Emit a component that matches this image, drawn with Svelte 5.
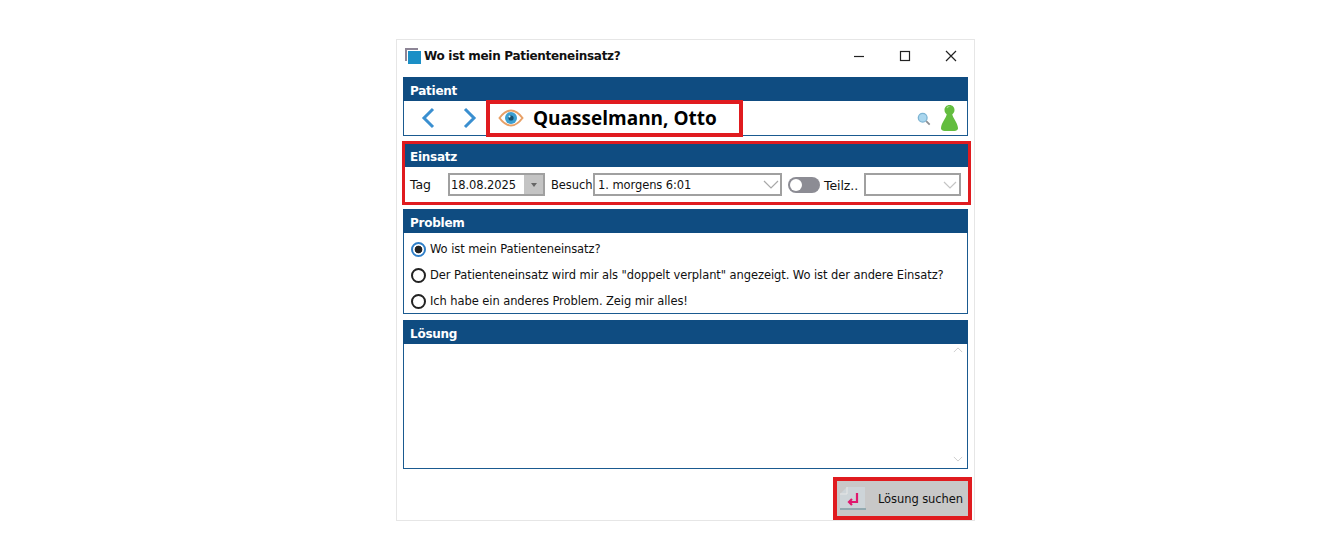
<script>
  const problems = [
    'Wo ist mein Patienteneinsatz?',
    'Der Patienteneinsatz wird mir als "doppelt verplant" angezeigt. Wo ist der andere Einsatz?',
    'Ich habe ein anderes Problem. Zeig mir alles!'
  ];
  let selected = $state(0);
</script>

<div class="window">
  <div class="titlebar">
    <svg class="appicon" width="16" height="16" viewBox="0 0 16 16">
      <path d="M1 13V1H13" fill="none" stroke="#8d8596" stroke-width="2" />
      <rect x="3" y="3" width="13" height="13" fill="#1b8fc6" />
    </svg>
    <span class="title">Wo ist mein Patienteneinsatz?</span>
    <div class="winbtns">
      <svg width="12" height="12" viewBox="0 0 12 12"><path d="M1 6.500h10" stroke="#222" stroke-width="1.200" /></svg>
      <svg width="12" height="12" viewBox="0 0 12 12"><rect x="1.500" y="1.500" width="9" height="9" fill="none" stroke="#222" stroke-width="1.200" /></svg>
      <svg width="12" height="12" viewBox="0 0 12 12"><path d="M1 1l10 10M11 1L1 11" stroke="#222" stroke-width="1.200" /></svg>
    </div>
  </div>

  <section class="panel patient">
    <h2>Patient</h2>
    <div class="body patient-row">
      <svg class="nav" width="14" height="22" viewBox="0 0 14 22"><path d="M12 2L3 11l9 9" fill="none" stroke="#3a8fd0" stroke-width="3" /></svg>
      <svg class="nav next" width="14" height="22" viewBox="0 0 14 22"><path d="M2 2l9 9-9 9" fill="none" stroke="#3a8fd0" stroke-width="3" /></svg>
      <div class="name-box">
        <svg width="26" height="18" viewBox="0 0 26 18">
          <path d="M1.500 9C6 3 9.500 1.500 13 1.500S20 3 24.500 9C20 15 16.500 16.500 13 16.500S6 15 1.500 9Z" fill="#fff" stroke="#e8a066" stroke-width="2" />
          <circle cx="13" cy="9" r="6" fill="#3d9fd0" />
          <circle cx="13" cy="9" r="2.600" fill="#17506f" />
          <circle cx="11.500" cy="7.500" r="1" fill="#d8f0fa" />
        </svg>
        <span class="name">Quasselmann, Otto</span>
      </div>
      <svg class="lens" width="14" height="14" viewBox="0 0 16 16">
        <circle cx="6.500" cy="6.500" r="5" fill="#a9d6ee" stroke="#7db4d3" stroke-width="1.500" />
        <path d="M10.500 10.500l4 4" stroke="#8b8f94" stroke-width="2" />
      </svg>
      <svg class="pawn" width="17" height="26" viewBox="0 0 17 26">
        <path d="M8.500 0C11.500 0 13.500 2.300 13.500 5C13.500 7 12.500 8.400 11.300 9.200C11.800 13 16.500 17.500 17 23C17.200 25 15.500 26 13.500 26H3.500C1.500 26 -.2 25 0 23C.5 17.500 5.200 13 5.700 9.200C4.500 8.400 3.500 7 3.500 5C3.500 2.300 5.500 0 8.500 0Z" fill="#63bd3f" />
        <path d="M6 3C6.500 2 7.500 1.500 8.500 1.500" fill="none" stroke="#a8e08a" stroke-width="1.200" />
      </svg>
    </div>
  </section>

  <section class="panel einsatz">
    <h2>Einsatz</h2>
    <div class="body einsatz-row">
      <span class="tag">Tag</span>
      <div class="field date">
        <span>18.08.2025</span>
        <span class="spin"><i></i></span>
      </div>
      <span class="besuch">Besuch</span>
      <div class="field visit">
        <span>1. morgens 6:01</span>
        <svg width="16" height="9" viewBox="0 0 16 9"><path d="M1 1l7 7 7-7" fill="none" stroke="#a8a8a8" stroke-width="1.200" /></svg>
      </div>
      <span class="toggle"><i></i></span>
      <span class="teilz">Teilz..</span>
      <div class="field part">
        <svg width="14" height="8" viewBox="0 0 14 8"><path d="M1 1l6 6 6-6" fill="none" stroke="#c4c4c4" stroke-width="1.200" /></svg>
      </div>
    </div>
  </section>

  <section class="panel problem">
    <h2>Problem</h2>
    <div class="body options">
      {#each problems as text, i}
        <button class="option" onclick={() => (selected = i)}>
          <span class="radio" class:on={selected === i}></span>
          <span>{text}</span>
        </button>
      {/each}
    </div>
  </section>

  <section class="panel solution">
    <h2>Lösung</h2>
    <div class="body textarea">
      <svg width="10" height="6" viewBox="0 0 12 7"><path d="M1 6l5-5 5 5" fill="none" stroke="#cfcfcf" stroke-width="1.200" /></svg>
      <svg width="10" height="6" viewBox="0 0 12 7"><path d="M1 1l5 5 5-5" fill="none" stroke="#cfcfcf" stroke-width="1.200" /></svg>
    </div>
  </section>

  <div class="footer">
    <button class="search">
      <svg width="26" height="24" viewBox="0 0 26 24">
        <path d="M7 0H25V21H0V7Z" fill="#cdd4d8" />
        <path d="M7 0V7H0" fill="none" stroke="#e6e6e6" stroke-width="1" />
        <rect x="0" y="21" width="26" height="2" fill="#93aab0" />
        <path d="M17 6v9H9M12 12l-3 3 3 3" fill="none" stroke="#e0196e" stroke-width="2.200" />
      </svg>
      <span>Lösung suchen</span>
    </button>
  </div>
</div>

<style>
  :global(body) {
    background: #fff;
  }
  .window {
    box-sizing: border-box;
    width: 579px;
    height: 482px;
    margin: 39px 0 0 396px;
    padding: 0 6px;
    border: 1px solid #e6e6e6;
    background: #fff;
    font-family: "DejaVu Sans", sans-serif;
    font-size: 11.5px;
    letter-spacing: -0.08px;
    color: #111;
    display: flex;
    flex-direction: column;
  }
  .titlebar {
    box-sizing: border-box;
    height: 37px;
    flex: none;
    padding-bottom: 5px;
    display: flex;
    align-items: center;
  }
  .appicon {
    margin: 0 3px 0 2px;
  }
  .title {
    font-weight: 700;
    font-size: 12px;
    letter-spacing: -0.3px;
  }
  .winbtns {
    margin-left: auto;
    margin-right: 11px;
    display: flex;
    gap: 34px;
  }
  .panel {
    flex: none;
    margin-bottom: 6px;
    width: 565px;
  }
  h2 {
    margin: 0;
    height: 24px;
    line-height: 29px;
    padding-left: 7px;
    background: #0f4c81;
    color: #fff;
    font-size: 12px;
    font-weight: 700;
    letter-spacing: -0.25px;
  }
  .body {
    box-sizing: border-box;
    border: 1px solid #1a5a90;
    border-top: none;
  }
  .patient {
    margin-bottom: 8px;
  }
  .patient-row {
    height: 35px;
    display: flex;
    align-items: center;
    padding-left: 17px;
  }
  .next {
    margin-left: 28px;
  }
  .name-box {
    box-sizing: border-box;
    width: 249px;
    height: 29px;
    margin-left: 13px;
    outline: 4px solid #e01b1f;
    display: flex;
    align-items: center;
    gap: 9px;
    padding-left: 8px;
  }
  .name {
    font-family: "Open Sans", sans-serif;
    font-size: 19px;
    font-weight: 700;
    letter-spacing: 0;
    color: #000;
  }
  .lens {
    margin-left: auto;
    margin-right: 10px;
    margin-top: 2px;
  }
  .pawn {
    margin-right: 9px;
  }
  .einsatz {
    width: 563px;
    margin-left: 2px;
    outline: 3px solid #e01b1f;
    margin-bottom: 7px;
  }
  .einsatz h2 {
    height: 23px;
    line-height: 27px;
    padding-left: 5px;
  }
  .einsatz-row {
    border: none;
    height: 35px;
    display: flex;
    align-items: center;
    padding-left: 5px;
  }
  .tag {
    width: 38px;
    font-size: 12.5px;
  }
  .field {
    box-sizing: border-box;
    height: 23px;
    flex: none;
    border: 2px solid #a0a0a0;
    display: flex;
    align-items: center;
    justify-content: space-between;
    padding-left: 1px;
    background: #fff;
  }
  .date {
    width: 97px;
  }
  .spin {
    width: 19px;
    height: 19px;
    background: #c4c4c4;
    display: flex;
    align-items: center;
    justify-content: center;
  }
  .spin i {
    border: 3px solid transparent;
    border-top: 4px solid #666;
    border-bottom: none;
  }
  .besuch {
    margin-left: 6px;
    width: 42px;
  }
  .visit {
    width: 189px;
    padding-right: 1px;
    padding-left: 3px;
  }
  .toggle {
    box-sizing: border-box;
    width: 32px;
    height: 16px;
    margin-left: 6px;
    border-radius: 8px;
    background: #8c8c94;
    padding: 2px;
    display: block;
  }
  .toggle i {
    display: block;
    width: 12px;
    height: 12px;
    border-radius: 50%;
    background: #fff;
  }
  .teilz {
    margin-left: 4px;
    width: 40px;
    font-size: 12.5px;
    padding-top: 2px;
  }
  .part {
    width: 97px;
    padding-right: 2px;
    justify-content: flex-end;
  }
  .options {
    height: 81px;
    padding: 3px 0 0 7px;
    display: flex;
    flex-direction: column;
  }
  .option {
    height: 26px;
    flex: none;
    padding: 0;
    border: none;
    background: none;
    font: inherit;
    letter-spacing: inherit;
    color: inherit;
    white-space: nowrap;
    display: flex;
    align-items: center;
    gap: 4px;
    text-align: left;
  }
  .radio {
    box-sizing: border-box;
    width: 15px;
    height: 15px;
    flex: none;
    border: 2px solid #222;
    border-radius: 50%;
    background: #fff;
  }
  .radio.on {
    border-color: #2f7fc8;
    background: radial-gradient(circle, #222 0 3.500px, #fff 4.200px);
  }
  .textarea {
    height: 125px;
    padding: 3px 4px 6px 0;
    display: flex;
    flex-direction: column;
    justify-content: space-between;
    align-items: flex-end;
  }
  .footer {
    display: flex;
    justify-content: flex-end;
    margin-top: 2px;
    margin-right: -4px;
  }
  .search {
    box-sizing: border-box;
    width: 139px;
    height: 43px;
    border: 4px solid #e01b1f;
    background: #c8c8c8;
    padding: 0 0 0 3px;
    font: inherit;
    letter-spacing: inherit;
    color: #111;
    display: flex;
    align-items: center;
    gap: 12px;
  }
</style>
